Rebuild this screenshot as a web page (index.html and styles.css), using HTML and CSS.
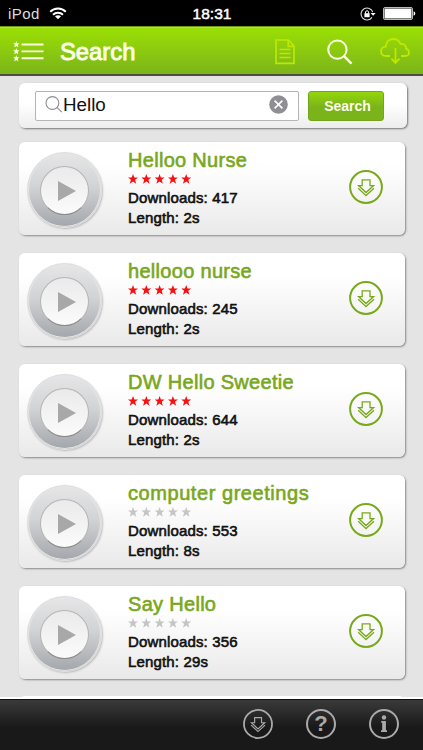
FILE: index.html
```
<!DOCTYPE html>
<html lang="en">
<head>
    <meta charset="UTF-8">
    <meta name="viewport" content="width=device-width, initial-scale=1.0">
    <title>Search</title>
    <link rel="stylesheet" href="styles.css">
</head>
<body>
    <svg class="defs" width="0" height="0">
        <symbol id="star" viewBox="0 0 10 10">
            <path d="M5 0 L6.3 3.4 H10 L7.1 5.8 L8.2 9.7 L5 7.4 L1.8 9.7 L2.9 5.8 L0 3.4 H3.7 Z" fill="currentColor"/>
        </symbol>
        <symbol id="stars" viewBox="0 0 64 10">
            <use href="#star" x="0" y="0" width="10" height="10"/>
            <use href="#star" x="13.3" y="0" width="10" height="10"/>
            <use href="#star" x="26.6" y="0" width="10" height="10"/>
            <use href="#star" x="39.9" y="0" width="10" height="10"/>
            <use href="#star" x="53.2" y="0" width="10" height="10"/>
        </symbol>
        <symbol id="download" viewBox="0 0 34 34">
            <circle cx="17" cy="17" r="15.9" fill="none" stroke="currentColor" stroke-width="2"/>
            <path d="M13.2 9.8 H21 V15.6 H24.6 L17 22.5 L9.6 15.6 H13.2 Z M9.2 18.2 L17 25.6 L25 18.2" fill="none" stroke="currentColor" stroke-width="1.3"/>
        </symbol>
    </svg>

    <div class="status">
        <div class="left">
            <span>iPod</span>
            <svg width="18" height="13" viewBox="0 0 18 13" fill="none" stroke="#fff" stroke-width="2">
                <path d="M1.2 4.8 C5.5 .4 12.5 .4 16.8 4.8 M4 7.7 C6.8 5 11.2 5 14 7.7"/>
                <path d="M9 12.2 L6 9.2 C7.7 7.8 10.3 7.8 12 9.2 Z" fill="#fff" stroke="none"/>
            </svg>
        </div>
        <span class="time">18:31</span>
        <div class="right">
            <svg width="16" height="14" viewBox="0 0 16 14">
                <path d="M12.8 5.2 A6 6 0 1 0 12 10.4" fill="none" stroke="#ddd" stroke-width="1.1"/>
                <path d="M10.6 6 H15.6 L13.1 8.8 Z" fill="#fff"/>
                <rect x="4.4" y="6.2" width="5.2" height="4" fill="#fff"/>
                <path d="M5.5 6.5 V5 A1.6 1.6 0 0 1 8.6 5 V6.5" fill="none" stroke="#fff"/>
            </svg>
            <svg width="33" height="14" viewBox="0 0 33 14">
                <rect x=".5" y=".5" width="29" height="12" rx="1.5" fill="none" stroke="#bbb"/>
                <rect x="1.5" y="1.5" width="27" height="10" fill="#fff"/>
                <path d="M30.6 4.2 Q32.3 4.7 32.3 6.5 Q32.3 8.3 30.6 8.8 Z" fill="#fff"/>
            </svg>
        </div>
    </div>

    <div class="header">
        <svg width="31" height="21" viewBox="0 0 31 21" color="#fbffda">
            <use href="#star" x="0" y="0" width="6.6" height="6.6"/>
            <use href="#star" x="0" y="7" width="6.6" height="6.6"/>
            <use href="#star" x="0" y="14" width="6.6" height="6.6"/>
            <path d="M8.5 3.5 H30.5 M8.5 10.4 H30.5 M8.5 17.3 H30.5" stroke="currentColor" stroke-width="1.9"/>
        </svg>
        <h1>Search</h1>
        <svg class="doc" width="20" height="26" viewBox="0 0 20 26" fill="none" stroke="#bfe800" stroke-width="1.7">
            <path d="M1 1 H13.5 L19 7 V24.4 H1 Z M13.2 1 V7.3 H19 M4.5 10.5 H15.5 M4.5 14.5 H15.5 M4.5 18.5 H15.5"/>
        </svg>
        <svg class="find" width="26" height="26" viewBox="0 0 26 26" fill="none" stroke="#fbffe8" stroke-width="2">
            <circle cx="10.4" cy="10.6" r="9.2"/>
            <path d="M17 17.2 L24.5 24.6" stroke-width="2.5"/>
        </svg>
        <svg class="cloud" width="30" height="27" viewBox="0 0 30 27" fill="none" stroke="#bfe800" stroke-width="1.8">
            <path d="M10 18 H6.5 C2.5 18 1 15.8 1 13.2 C1 10.5 3 8.7 5.8 8.6 C5.8 4 9 1 13.2 1 C16.8 1 19.4 2.8 20.6 6 C23.8 5.2 26.5 7.5 26 10.6 C28.2 11.4 29 12.8 29 14.5 C29 16.8 27.2 18 24.8 18 H21"/>
            <path d="M15.5 10 V24.5 M11.5 20.7 L15.5 24.9 L19.5 20.7"/>
        </svg>
    </div>

    <div class="content">
        <div class="search-box">
            <div class="field">
                <svg width="18" height="18" viewBox="0 0 18 18" fill="none" stroke="#8e8e93" stroke-width="1.1">
                    <circle cx="7.4" cy="7.0" r="6.4"/>
                    <path d="M11.8 11.4 L16.8 16.2"/>
                </svg>
                <span>Hello</span>
                <svg class="clear" width="19" height="19" viewBox="0 0 19 19">
                    <circle cx="9.5" cy="9.5" r="9.3" fill="#8e8e93"/>
                    <path d="M5.6 5.6 L13.4 13.4 M13.4 5.6 L5.6 13.4" stroke="#fff" stroke-width="1.6"/>
                </svg>
            </div>
            <div class="btn">Search</div>
        </div>

        <div class="card">
            <div class="play"><div class="knob"><div class="arrow"></div></div></div>
            <div class="info">
                <h2>Helloo Nurse</h2>
                <svg class="stars red" width="64" height="10"><use href="#stars"/></svg>
                <p>Downloads: 417</p>
                <p>Length: 2s</p>
            </div>
            <svg class="get" width="34" height="34"><use href="#download"/></svg>
        </div>
        <div class="card">
            <div class="play"><div class="knob"><div class="arrow"></div></div></div>
            <div class="info">
                <h2>hellooo nurse</h2>
                <svg class="stars red" width="64" height="10"><use href="#stars"/></svg>
                <p>Downloads: 245</p>
                <p>Length: 2s</p>
            </div>
            <svg class="get" width="34" height="34"><use href="#download"/></svg>
        </div>
        <div class="card">
            <div class="play"><div class="knob"><div class="arrow"></div></div></div>
            <div class="info">
                <h2>DW Hello Sweetie</h2>
                <svg class="stars red" width="64" height="10"><use href="#stars"/></svg>
                <p>Downloads: 644</p>
                <p>Length: 2s</p>
            </div>
            <svg class="get" width="34" height="34"><use href="#download"/></svg>
        </div>
        <div class="card">
            <div class="play"><div class="knob"><div class="arrow"></div></div></div>
            <div class="info">
                <h2 class="wide">computer greetings</h2>
                <svg class="stars" width="64" height="10"><use href="#stars"/></svg>
                <p>Downloads: 553</p>
                <p>Length: 8s</p>
            </div>
            <svg class="get" width="34" height="34"><use href="#download"/></svg>
        </div>
        <div class="card">
            <div class="play"><div class="knob"><div class="arrow"></div></div></div>
            <div class="info">
                <h2>Say Hello</h2>
                <svg class="stars" width="64" height="10"><use href="#stars"/></svg>
                <p>Downloads: 356</p>
                <p>Length: 29s</p>
            </div>
            <svg class="get" width="34" height="34"><use href="#download"/></svg>
        </div>
        <div class="card next"></div>
    </div>

    <div class="footer">
        <svg width="30" height="30"><use href="#download" width="30" height="30"/></svg>
        <div class="round">?</div>
        <div class="round">
            <svg width="8" height="18" viewBox="0 0 8 18" fill="#aaa">
                <circle cx="4" cy="2.5" r="2.2"/>
                <path d="M1.2 6 H5.9 V15.2 H7 V17 H1 V15.2 H2.2 V7.8 H1.2 Z"/>
            </svg>
        </div>
    </div>
</body>
</html>
```
FILE: styles.css
```
* {
    box-sizing: border-box;
}

body {
    margin: 0;
    width: 423px;
    height: 750px;
    overflow: hidden;
    display: flex;
    flex-direction: column;
    font-family: "Liberation Sans", Arial, sans-serif;
    background-color: #e4e4e4;
}

svg {
    display: block;
    flex: none;
}

.defs {
    position: absolute;
}

.status {
    height: 26px;
    flex: none;
    display: grid;
    grid-template-columns: 1fr auto 1fr;
    align-items: center;
    padding: 1px 7px 0 8px;
    background: #000;
    color: #fff;
    font-size: 15.5px;
}

.status .left {
    display: flex;
    align-items: center;
    gap: 9px;
    color: #ddd;
    font-size: 15px;
    letter-spacing: 0.4px;
}

.status .right {
    display: flex;
    justify-content: flex-end;
    align-items: center;
    gap: 7px;
}

.status .time {
    -webkit-text-stroke: 0.5px #fff;
}

.header {
    height: 50px;
    flex: none;
    display: flex;
    align-items: center;
    padding: 2px 13px 0 13px;
    background: linear-gradient(#9be004, #7cb41b);
    border-top: 1px solid #6d9818;
    border-bottom: 2px solid #4d4d45;
    box-shadow: inset 0 1px #a8ea2c;
}

.header h1 {
    margin: 0 0 0 16px;
    font-size: 23.8px;
    font-weight: normal;
    color: #fbffe8;
    -webkit-text-stroke: 0.9px #fbffe8;
}

.header .doc {
    margin-left: auto;
}

.header .find {
    margin-left: 32px;
}

.header .cloud {
    margin-left: 27px;
}

.content {
    flex: 1;
    min-height: 0;
    overflow: hidden;
    padding: 7px 16px 0 19px;
    border-bottom: 2px solid #fff;
}

.search-box {
    width: 388px;
    height: 45px;
    display: flex;
    align-items: center;
    gap: 9px;
    padding: 0 23px 0 16px;
    margin-bottom: 14px;
    border-radius: 6px;
    background: linear-gradient(#fff 45%, #ededed);
    box-shadow: 1px 1px 2px #777;
}

.field {
    width: 264px;
    height: 30px;
    display: flex;
    align-items: center;
    padding: 0 10px 2px 9px;
    border: 1px solid #b5b5b5;
    border-radius: 2px;
    background: #fff;
    font-size: 18.8px;
    color: #111;
}

.field span {
    padding-top: 1px;
}

.field .clear {
    margin-left: auto;
}

.btn {
    width: 76px;
    height: 30px;
    padding-left: 3px;
    border: 1px solid #73a51c;
    border-radius: 3px;
    background: linear-gradient(#93d60a, #7bb31b 55%);
    color: #fbffe8;
    font-size: 14px;
    font-weight: bold;
    line-height: 28px;
    text-align: center;
}

.card {
    width: 386px;
    height: 93px;
    display: flex;
    margin-bottom: 18px;
    padding: 10px 22px 0 8px;
    border-radius: 6px;
    background: linear-gradient(#fff 25%, #e9e9e9);
    box-shadow: 1px 1px 2px #888;
}

.next {
    margin-top: -1px;
    box-shadow: none;
}

.play {
    width: 75px;
    height: 76px;
    flex: none;
    display: flex;
    justify-content: center;
    align-items: center;
    border: 1px solid #ddd;
    border-radius: 50%;
    background: linear-gradient(#e6e6e7, #d2d3d5 45%, #a3a6ab);
    box-shadow: inset 0 0 0 1px #e6e6e6, 1px 1px 2px #bbb;
}

.knob {
    width: 49px;
    height: 49px;
    display: flex;
    justify-content: center;
    align-items: center;
    border-radius: 50%;
    border: 1px solid #b4b5b6;
    border-bottom-color: #888;
    background: linear-gradient(#eaeaea, #fbfbfb);
}

.arrow {
    margin: 2px 0 0 5px;
    border-left: 18px solid #a8a8a8;
    border-top: 10px solid transparent;
    border-bottom: 10px solid transparent;
}

.info {
    margin-left: 26px;
    margin-top: -4px;
}

.info h2 {
    margin: 0;
    font-size: 20px;
    line-height: 24px;
    font-weight: normal;
    letter-spacing: 0.3px;
    color: #79a71b;
    -webkit-text-stroke: 0.6px #79a71b;
}

.info .wide {
    letter-spacing: 0.56px;
}

.info .stars {
    margin: 2px 0 4px;
    color: #c5c5c5;
}

.info .red {
    color: #f51111;
}

.info p {
    margin: 0;
    font-size: 15px;
    line-height: 20px;
    letter-spacing: 0.15px;
    color: #111;
    -webkit-text-stroke: 0.6px #111;
}

.get {
    margin: 18px 0 0 auto;
    color: #79a91b;
}

.footer {
    height: 51px;
    flex: none;
    display: flex;
    justify-content: flex-end;
    align-items: center;
    gap: 33px;
    padding: 0 24px 2px 0;
    border-top: 1px solid #111;
    background: linear-gradient(#3a3a3a, #191919 55%);
    color: #aaa;
}

.round {
    width: 30px;
    height: 30px;
    display: flex;
    justify-content: center;
    align-items: center;
    border: 2px solid #aaa;
    border-radius: 50%;
    font-size: 22px;
    font-weight: bold;
}
```
